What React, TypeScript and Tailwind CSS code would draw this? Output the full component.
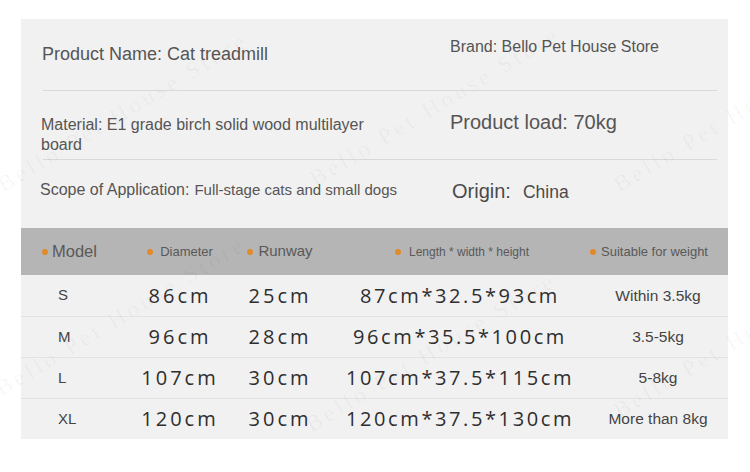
import React from 'react';

const sans = { fontFamily: '"Liberation Sans", Arial, sans-serif' };
const num = { fontFamily: '"Open Sans", sans-serif' };

const rows = [
  { model: 'S', diameter: '86cm', runway: '25cm', size: '87cm*32.5*93cm', weight: 'Within 3.5kg' },
  { model: 'M', diameter: '96cm', runway: '28cm', size: '96cm*35.5*100cm', weight: '3.5-5kg' },
  { model: 'L', diameter: '107cm', runway: '30cm', size: '107cm*37.5*115cm', weight: '5-8kg' },
  { model: 'XL', diameter: '120cm', runway: '30cm', size: '120cm*37.5*130cm', weight: 'More than 8kg' },
];

const marks = [
  'left-[6px] top-[172px]',
  'left-[318px] top-[166px]',
  'left-[622px] top-[172px]',
  'left-[4px] top-[376px]',
  'left-[314px] top-[412px]',
  'left-[622px] top-[398px]',
];

const Dot = () => <span className="inline-block w-[6px] h-[6px] rounded-full bg-[#e08a2a]" />;

export default function App() {
  return (
    <div className="relative w-[750px] h-[472px] bg-white overflow-hidden" style={sans}>
      <div className="pt-[19px] pl-[21px]">
        <div className="w-[707px] bg-[#f2f1f1] text-[#555]">
          {/* Info block */}
          <div className="ml-[22px] mr-[11px]">
            <div className="grid grid-cols-[407px_1fr] h-[72px] border-b border-[#d9d9d9]">
              <div className="pt-[25px] text-[18px] leading-[21px] -ml-px">Product Name: Cat treadmill</div>
              <div className="pt-[19px] text-[16px] leading-[18px]">Brand: Bello Pet House Store</div>
            </div>
            <div className="grid grid-cols-[407px_1fr] h-[69px] border-b border-[#d9d9d9]">
              <div className="pt-[24px] text-[16px] leading-[20px] max-w-[345px] -ml-[2px]">
                Material: E1 grade birch solid wood multilayer board
              </div>
              <div className="pt-[20px] text-[20px] leading-[23px]">Product load: 70kg</div>
            </div>
            <div className="grid grid-cols-[407px_1fr] h-[68px]">
              <div className="pt-[20px] leading-[20px] -ml-[3px] whitespace-nowrap">
                <span className="text-[16px]">Scope of Application:</span>
                <span className="text-[15px] ml-[5px]">Full-stage cats and small dogs</span>
              </div>
              <div className="pt-[20px] leading-[22px] ml-[2px] text-[#4a4a4a]">
                <span className="text-[20px]">Origin:</span>
                <span className="text-[17.5px] ml-[12px]">China</span>
              </div>
            </div>
          </div>

          {/* Table header */}
          <div className="flex items-center h-[47px] bg-[#b5b5b5] text-[#595959]">
            <div className="w-[109px] pl-[21px] flex items-center gap-[4px]">
              <Dot />
              <span className="text-[16.5px]">Model</span>
            </div>
            <div className="w-[100px] flex items-center justify-center gap-[7px]">
              <Dot />
              <span className="text-[13px]">Diameter</span>
            </div>
            <div className="w-[100px] flex items-center justify-center gap-[5px]">
              <Dot />
              <span className="text-[15px]">Runway</span>
            </div>
            <div className="w-[260px] flex items-center justify-center gap-[8px] pl-[4px]">
              <Dot />
              <span className="text-[12px]">Length * width * height</span>
            </div>
            <div className="flex-1 flex items-center justify-center gap-[5px] pr-[20px]">
              <Dot />
              <span className="text-[13px]">Suitable for weight</span>
            </div>
          </div>

          {/* Table rows */}
          {rows.map((r, i) => (
            <div
              key={r.model}
              className={`flex items-center h-[41px] ${i > 0 ? 'border-t border-[#e3e3e3]' : ''}`}
            >
              <div className="w-[109px] pl-[37px] text-[15px] text-[#444]">{r.model}</div>
              <div className="w-[100px] text-center text-[20px] tracking-[3px] text-[#2e2e2e]" style={num}>
                {r.diameter}
              </div>
              <div className="w-[100px] text-center text-[20px] tracking-[3px] text-[#2e2e2e]" style={num}>
                {r.runway}
              </div>
              <div className="w-[260px] text-center text-[20px] tracking-[2.6px] text-[#2e2e2e]" style={num}>
                {r.size}
              </div>
              <div className="flex-1 text-center text-[15.5px] text-[#444] pr-[2px]">{r.weight}</div>
            </div>
          ))}
        </div>
      </div>

      {/* Watermark */}
      {marks.map((m) => (
        <span
          key={m}
          className={`absolute ${m} origin-bottom-left -rotate-[31deg] whitespace-nowrap text-[23px] leading-[25px] tracking-[4px] text-black/[0.04] pointer-events-none`}
          style={{ fontFamily: '"Liberation Serif", serif' }}
        >
          Bello Pet House Store
        </span>
      ))}
    </div>
  );
}
